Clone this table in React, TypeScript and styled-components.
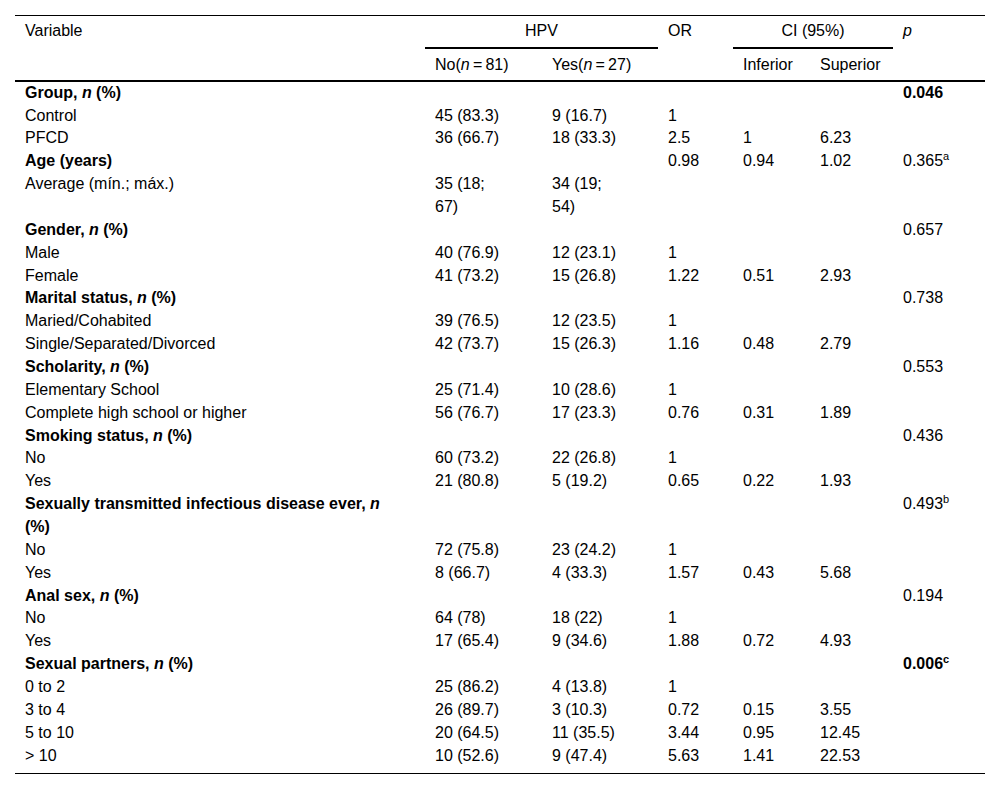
import { FC, ReactNode } from 'react'
import styled, { createGlobalStyle } from 'styled-components'

const COLUMNS = '410px 117px 116px 75px 77px 83px 92px'

type TRow = {
  label: ReactNode
  section?: boolean
  no?: ReactNode
  yes?: ReactNode
  or?: string
  inf?: string
  sup?: string
  p?: string
  pNote?: string
  pBold?: boolean
}

const N = () => <i>n</i>
const pct = (title: string) => (
  <>
    {title}, <N /> (%)
  </>
)

const rows: TRow[] = [
  { label: pct('Group'), section: true, p: '0.046', pBold: true },
  { label: 'Control', no: '45 (83.3)', yes: '9 (16.7)', or: '1' },
  { label: 'PFCD', no: '36 (66.7)', yes: '18 (33.3)', or: '2.5', inf: '1', sup: '6.23' },
  { label: 'Age (years)', section: true, or: '0.98', inf: '0.94', sup: '1.02', p: '0.365', pNote: 'a' },
  {
    label: 'Average (mín.; máx.)',
    no: (
      <>
        35 (18;
        <br />
        67)
      </>
    ),
    yes: (
      <>
        34 (19;
        <br />
        54)
      </>
    ),
  },
  { label: pct('Gender'), section: true, p: '0.657' },
  { label: 'Male', no: '40 (76.9)', yes: '12 (23.1)', or: '1' },
  { label: 'Female', no: '41 (73.2)', yes: '15 (26.8)', or: '1.22', inf: '0.51', sup: '2.93' },
  { label: pct('Marital status'), section: true, p: '0.738' },
  { label: 'Maried/Cohabited', no: '39 (76.5)', yes: '12 (23.5)', or: '1' },
  { label: 'Single/Separated/Divorced', no: '42 (73.7)', yes: '15 (26.3)', or: '1.16', inf: '0.48', sup: '2.79' },
  { label: pct('Scholarity'), section: true, p: '0.553' },
  { label: 'Elementary School', no: '25 (71.4)', yes: '10 (28.6)', or: '1' },
  { label: 'Complete high school or higher', no: '56 (76.7)', yes: '17 (23.3)', or: '0.76', inf: '0.31', sup: '1.89' },
  { label: pct('Smoking status'), section: true, p: '0.436' },
  { label: 'No', no: '60 (73.2)', yes: '22 (26.8)', or: '1' },
  { label: 'Yes', no: '21 (80.8)', yes: '5 (19.2)', or: '0.65', inf: '0.22', sup: '1.93' },
  {
    label: (
      <>
        Sexually transmitted infectious disease ever, <N />
        <br />
        (%)
      </>
    ),
    section: true,
    p: '0.493',
    pNote: 'b',
  },
  { label: 'No', no: '72 (75.8)', yes: '23 (24.2)', or: '1' },
  { label: 'Yes', no: '8 (66.7)', yes: '4 (33.3)', or: '1.57', inf: '0.43', sup: '5.68' },
  { label: pct('Anal sex'), section: true, p: '0.194' },
  { label: 'No', no: '64 (78)', yes: '18 (22)', or: '1' },
  { label: 'Yes', no: '17 (65.4)', yes: '9 (34.6)', or: '1.88', inf: '0.72', sup: '4.93' },
  { label: pct('Sexual partners'), section: true, p: '0.006', pNote: 'c', pBold: true },
  { label: '0 to 2', no: '25 (86.2)', yes: '4 (13.8)', or: '1' },
  { label: '3 to 4', no: '26 (89.7)', yes: '3 (10.3)', or: '0.72', inf: '0.15', sup: '3.55' },
  { label: '5 to 10', no: '20 (64.5)', yes: '11 (35.5)', or: '3.44', inf: '0.95', sup: '12.45' },
  { label: '> 10', no: '10 (52.6)', yes: '9 (47.4)', or: '5.63', inf: '1.41', sup: '22.53' },
]

const App: FC = () => {
  return (
    <>
      <GlobalStyle />
      <Page>
        <Table>
          <Head>
            <HeadCell $rowSpan={2}>Variable</HeadCell>
            <HeadCell $colSpan={2} $group>
              HPV
            </HeadCell>
            <HeadCell $rowSpan={2}>OR</HeadCell>
            <HeadCell $colSpan={2} $group>
              CI (95%)
            </HeadCell>
            <HeadCell $rowSpan={2}>
              <i>p</i>
            </HeadCell>
            <HeadCell $sub>
              No(<i>n</i>&#8201;=&#8201;81)
            </HeadCell>
            <HeadCell $sub>
              Yes(<i>n</i>&#8201;=&#8201;27)
            </HeadCell>
            <HeadCell $sub>Inferior</HeadCell>
            <HeadCell $sub>Superior</HeadCell>
          </Head>
          <Body>
            {rows.map((row, index) => (
              <Row key={index}>
                <Cell $bold={row.section}>{row.label}</Cell>
                <Cell>{row.no}</Cell>
                <Cell>{row.yes}</Cell>
                <Cell>{row.or}</Cell>
                <Cell>{row.inf}</Cell>
                <Cell>{row.sup}</Cell>
                <Cell $bold={row.pBold}>
                  {row.p}
                  {row.pNote && <Note>{row.pNote}</Note>}
                </Cell>
              </Row>
            ))}
          </Body>
        </Table>
      </Page>
    </>
  )
}

const GlobalStyle = createGlobalStyle`
  html, body {
    margin: 0;
    padding: 0;
    background: #ffffff;
  }
  body {
    font-family: "Liberation Sans", Arial, sans-serif;
    color: #000000;
  }
`

const Page = styled.div`
  padding: 15px 15px 0;
`

const Table = styled.div`
  width: 970px;
  font-size: 16px;
  line-height: 22.86px;
`

const Head = styled.div`
  display: grid;
  grid-template-columns: ${COLUMNS};
  border-top: 1px solid #000;
  border-bottom: 2px solid #000;
`

const HeadCell = styled.div<{ $colSpan?: number; $rowSpan?: number; $group?: boolean; $sub?: boolean }>`
  grid-column: span ${(p) => p.$colSpan || 1};
  grid-row: span ${(p) => p.$rowSpan || 1};
  padding: ${(p) => (p.$sub ? '5px 10px 3px' : '4px 10px 4px')};
  text-align: ${(p) => (p.$group ? 'center' : 'left')};
  border-bottom: ${(p) => (p.$group ? '2px solid #000' : 'none')};
`

const Body = styled.div`
  padding-bottom: 5px;
  border-bottom: 1px solid #000;
`

const Row = styled.div`
  display: grid;
  grid-template-columns: ${COLUMNS};
`

const Cell = styled.div<{ $bold?: boolean }>`
  padding: 0 10px;
  font-weight: ${(p) => (p.$bold ? 700 : 400)};
  white-space: nowrap;
`

const Note = styled.span`
  position: relative;
  top: -6px;
  font-size: 11px;
  line-height: 0;
`

export default App
